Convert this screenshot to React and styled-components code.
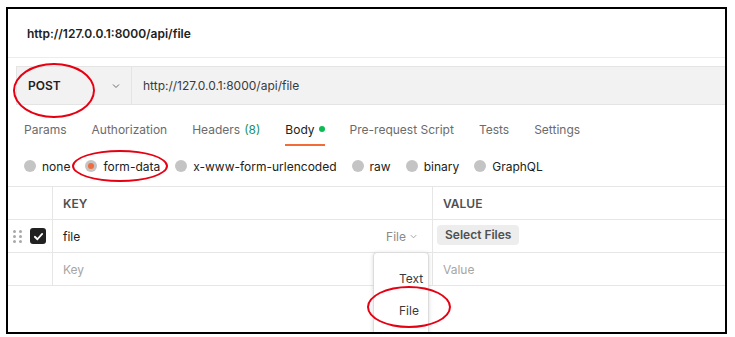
import React from 'react';
import styled, { createGlobalStyle } from 'styled-components';

const GlobalStyle = createGlobalStyle`
  body {
    margin: 0;
    background: #fff;
    font-family: Inter, "Noto Sans", sans-serif;
    color: #212121;
  }
`;

const Frame = styled.div`
  position: relative;
  box-sizing: border-box;
  margin: 7px 0 0 6px;
  width: 721px;
  height: 327px;
  border: 2px solid #000;
  overflow: hidden;
  background: #fff;
`;

const TitleBar = styled.div`
  height: 48px;
  display: flex;
  align-items: center;
  padding-left: 19px;
  border-bottom: 1px solid #ececec;
  font-size: 12px;
  font-weight: 600;
  color: #212121;
`;

const UrlBar = styled.div`
  display: flex;
  height: 39px;
  margin: 8px -20px 0 8px;
  box-sizing: border-box;
  border: 1px solid #e4e4e4;
  background: #f2f2f2;
  font-size: 12px;
`;

const Method = styled.div`
  width: 115px;
  display: flex;
  align-items: center;
  justify-content: space-between;
  padding: 0 10px 0 11px;
  box-sizing: border-box;
  border-right: 1px solid #e4e4e4;
  font-weight: 600;
`;

const UrlText = styled.div`
  display: flex;
  align-items: center;
  padding-left: 11px;
  color: #3a3a3a;
`;

const Tabs = styled.div`
  display: flex;
  gap: 25px;
  padding-left: 16px;
  height: 34px;
  margin-top: 7px;
  font-size: 12px;
`;

const Tab = styled.div`
  display: flex;
  align-items: center;
  gap: 4px;
  color: ${p => (p.$active ? '#212121' : '#6b6b6b')};
  border-bottom: 2px solid ${p => (p.$active ? '#f26b3a' : 'transparent')};
  box-sizing: border-box;
  padding-top: 2px;
`;

const Count = styled.span`
  color: #1a8f6b;
`;

const Dot = styled.span`
  width: 6px;
  height: 6px;
  border-radius: 50%;
  background: #0cbb52;
`;

const Radios = styled.div`
  display: flex;
  align-items: center;
  gap: 15px;
  padding-left: 16px;
  height: 40px;
  font-size: 12px;
`;

const RadioItem = styled.label`
  display: flex;
  align-items: center;
  gap: 6px;
  color: #212121;
`;

const Circle = styled.span`
  width: 12px;
  height: 12px;
  border-radius: 50%;
  background: #c4c4c4;
  display: flex;
  align-items: center;
  justify-content: center;
  &::after {
    content: '';
    width: 6px;
    height: 6px;
    border-radius: 50%;
    background: ${p => (p.$checked ? '#f26b3a' : 'transparent')};
  }
`;

const Table = styled.div`
  border-top: 1px solid #e6e6e6;
  font-size: 12px;
`;

const Row = styled.div`
  display: grid;
  grid-template-columns: 44px 380px 1fr;
  height: 33px;
  border-bottom: 1px solid #e6e6e6;
  box-sizing: border-box;
`;

const Cell = styled.div`
  display: flex;
  align-items: center;
  padding: 0 ${p => (p.$pad ? '10px' : '0')};
  border-left: ${p => (p.$first ? 'none' : '1px solid #e6e6e6')};
  gap: 6px;
  color: ${p => (p.$muted ? '#a6a6a6' : '#212121')};
`;

const HeadText = styled.span`
  font-size: 12px;
  font-weight: 600;
  color: #505050;
`;

const KeyCell = styled(Cell)`
  justify-content: space-between;
  padding-right: 14px;
`;

const TypeSelect = styled.span`
  display: flex;
  align-items: center;
  gap: 3px;
  color: #8a8a8a;
`;

const Handle = styled.div`
  display: grid;
  grid-template-columns: repeat(2, 3px);
  gap: 2px 3px;
  margin-left: 5px;
  span {
    width: 3px;
    height: 3px;
    border-radius: 50%;
    background: #a9a9a9;
  }
`;

const Check = styled.span`
  width: 16px;
  height: 16px;
  border-radius: 3px;
  background: #212121;
  display: flex;
  align-items: center;
  justify-content: center;
  margin-left: 2px;
`;

const SelectButton = styled.button`
  font-family: inherit;
  font-size: 12px;
  font-weight: 600;
  color: #505050;
  background: #ededed;
  border: none;
  border-radius: 4px;
  height: 20px;
  padding: 0 8px;
  margin: -3px 0 0 -6px;
`;

const Menu = styled.div`
  position: absolute;
  left: 365px;
  top: 243px;
  width: 56px;
  height: 100px;
  background: #fff;
  border: 1px solid #dcdcdc;
  border-radius: 4px;
  box-shadow: 0 1px 4px rgba(0, 0, 0, 0.15);
  display: flex;
  flex-direction: column;
  padding-top: 9px;
  box-sizing: border-box;
  font-size: 12px;
`;

const MenuItem = styled.div`
  height: 32px;
  display: flex;
  align-items: center;
  padding-left: 25px;
  color: #3a3a3a;
`;

const Mark = styled.div`
  position: absolute;
  left: ${p => p.$x}px;
  top: ${p => p.$y}px;
  width: ${p => p.$w}px;
  height: ${p => p.$h}px;
  box-sizing: border-box;
  border: 2.5px solid #e60012;
  border-radius: 50%;
  pointer-events: none;
`;

const Chevron = ({ size = 10, color = '#6b6b6b' }) => (
  <svg width={size} height={size} viewBox="0 0 10 10" fill="none">
    <path d="M2 3.5 L5 6.5 L8 3.5" stroke={color} strokeWidth="1" />
  </svg>
);

const tabs = ['Params', 'Authorization', 'Headers', 'Body', 'Pre-request Script', 'Tests', 'Settings'];
const bodyTypes = ['none', 'form-data', 'x-www-form-urlencoded', 'raw', 'binary', 'GraphQL'];

export default function App() {
  return (
    <>
      <GlobalStyle />
      <Frame>
        <TitleBar>http://127.0.0.1:8000/api/file</TitleBar>
        <UrlBar>
          <Method>
            POST
            <Chevron />
          </Method>
          <UrlText>http://127.0.0.1:8000/api/file</UrlText>
        </UrlBar>
        <Tabs>
          {tabs.map(t => (
            <Tab key={t} $active={t === 'Body'}>
              {t}
              {t === 'Headers' && <Count>(8)</Count>}
              {t === 'Body' && <Dot />}
            </Tab>
          ))}
        </Tabs>
        <Radios>
          {bodyTypes.map(b => (
            <RadioItem key={b}>
              <Circle $checked={b === 'form-data'} />
              {b}
            </RadioItem>
          ))}
        </Radios>
        <Table>
          <Row>
            <Cell $first />
            <Cell $pad><HeadText>KEY</HeadText></Cell>
            <Cell $pad><HeadText>VALUE</HeadText></Cell>
          </Row>
          <Row>
            <Cell $first>
              <Handle>
                {[0, 1, 2, 3, 4, 5].map(i => <span key={i} />)}
              </Handle>
              <Check>
                <svg width="11" height="11" viewBox="0 0 12 12" fill="none">
                  <path d="M2 6.3 L4.8 9 L10 3.2" stroke="#fff" strokeWidth="2" strokeLinecap="round" strokeLinejoin="round" />
                </svg>
              </Check>
            </Cell>
            <KeyCell $pad>
              file
              <TypeSelect>
                File
                <Chevron size={9} color="#9a9a9a" />
              </TypeSelect>
            </KeyCell>
            <Cell $pad><SelectButton>Select Files</SelectButton></Cell>
          </Row>
          <Row>
            <Cell $first />
            <Cell $pad $muted>Key</Cell>
            <Cell $pad $muted>Value</Cell>
          </Row>
        </Table>
        <Menu>
          <MenuItem>Text</MenuItem>
          <MenuItem>File</MenuItem>
        </Menu>
        <Mark $x={5} $y={54} $w={82} $h={55} />
        <Mark $x={64} $y={141} $w={96} $h={32} />
        <Mark $x={359} $y={277} $w={84} $h={42} />
      </Frame>
    </>
  );
}
